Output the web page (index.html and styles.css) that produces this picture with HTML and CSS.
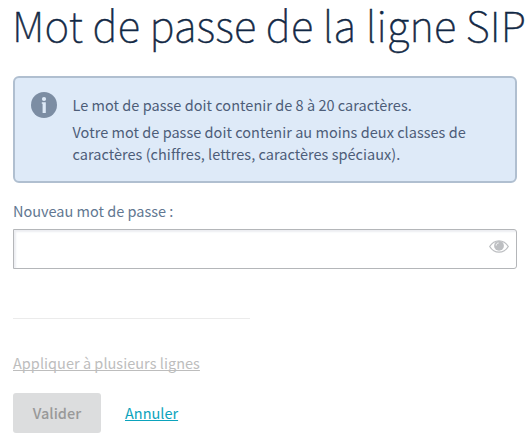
FILE: index.html
```
<!DOCTYPE html>
<html lang="fr">
<head>
<meta charset="utf-8">
<title>Mot de passe de la ligne SIP</title>
<link rel="stylesheet" href="styles.css">
</head>
<body>
<main class="page">
  <h1 class="title"><span>Mot de passe de la ligne SIP</span></h1>
  <section class="notice">
    <svg class="notice-icon" viewBox="0 0 26 26" aria-hidden="true">
      <circle cx="13" cy="13" r="13" fill="#7c8da3"/>
      <circle cx="13" cy="7" r="2.1" fill="#deeaf8"/>
      <path d="M10.800 10.300h4V21h-3.200v-9.200h-.8z" fill="#deeaf8"/>
    </svg>
    <div class="notice-text">
      <p class="line-one"><span>Le mot de passe doit contenir de 8 à 20 caractères.</span></p>
      <p class="line-two"><span>Votre mot de passe doit contenir au moins deux classes de</span><br><span>caractères (chiffres, lettres, caractères spéciaux).</span></p>
    </div>
  </section>
  <label class="label" for="password"><span>Nouveau mot de passe :</span></label>
  <div class="field">
    <input id="password" class="input" type="password">
    <svg class="eye" viewBox="0 0 20 13" aria-hidden="true">
      <path d="M.7 6.500C3 2.700 6.200.8 10 .8s7 1.900 9.300 5.700c-2.300 3.800-5.500 5.700-9.300 5.700S3 10.300.7 6.500z" fill="#fff" stroke="#bdbfc2" stroke-width="1.300"/>
      <circle cx="10" cy="5.800" r="4.900" fill="#bdbfc2"/>
      <path d="M7.200 5.500c0-1.500 1-2.500 2.400-2.500" fill="none" stroke="#fff" stroke-width="1"/>
    </svg>
  </div>
  <hr class="rule">
  <a class="apply"><span>Appliquer à plusieurs lignes</span></a>
  <div class="actions">
    <button class="submit" disabled><span>Valider</span></button>
    <a class="cancel" href="#"><span>Annuler</span></a>
  </div>
</main>
</body>
</html>
```
FILE: styles.css
```
* { box-sizing: border-box; }
body {
  margin: 0;
  background: #fff;
  color: #4d5d78;
  font: 14.5px/22px "Noto Sans CJK JP", sans-serif;
  overflow: hidden;
}
.page { display: flex; flex-direction: column; align-items: flex-start; padding: 0 12px 0 13px; }
.title {
  margin: 0 0 0 -1px;
  height: 76px;
  color: #122844;
  font-size: 42px;
  font-weight: 100;
  line-height: 48px;
  letter-spacing: 0.19px;
  -webkit-text-stroke: 0.5px #122844;
  white-space: nowrap;
}
.notice {
  display: flex;
  gap: 15.5px;
  width: 504px;
  height: 107px;
  padding: 14px 16px;
  border: 2px solid #b0bfd0;
  border-radius: 6px;
  background: #deeaf8;
}
.notice-icon { flex: none; width: 26px; height: 26px; }
.notice-text { padding-top: 2px; letter-spacing: 0.03px; white-space: nowrap; }
.notice-text p { margin: 0 0 5px; }
.label { margin-top: 17px; height: 29px; color: #627791; }
.field {
  display: flex;
  align-items: center;
  width: 504px;
  height: 40px;
  padding-right: 7px;
  border: 1px solid #b4b6b9;
  border-radius: 0 3px 3px 0;
  box-shadow: inset 2px 2px 2px #edeef2;
}
.input { flex: 1; height: 38px; border: 0; outline: 0; background: transparent; }
.eye { width: 20px; height: 13px; margin-bottom: 5px; }
.rule { width: 237px; height: 1px; margin: 49px 0 0; border: 0; background: #ebebeb; }
.apply { margin-top: 33px; height: 41px; color: #bdbdbd; letter-spacing: 0.03px; text-decoration: underline; text-decoration-skip-ink: none; }
.actions { display: flex; align-items: center; gap: 24px; height: 40px; }
.submit {
  width: 88px;
  height: 40px;
  padding: 0;
  border: 0;
  border-radius: 3px;
  background: #dcddde;
  color: #999;
  font: 500 14.5px/22px "Noto Sans CJK JP", sans-serif;
}
.cancel { color: #0ba3bc; text-decoration: underline; }
```
